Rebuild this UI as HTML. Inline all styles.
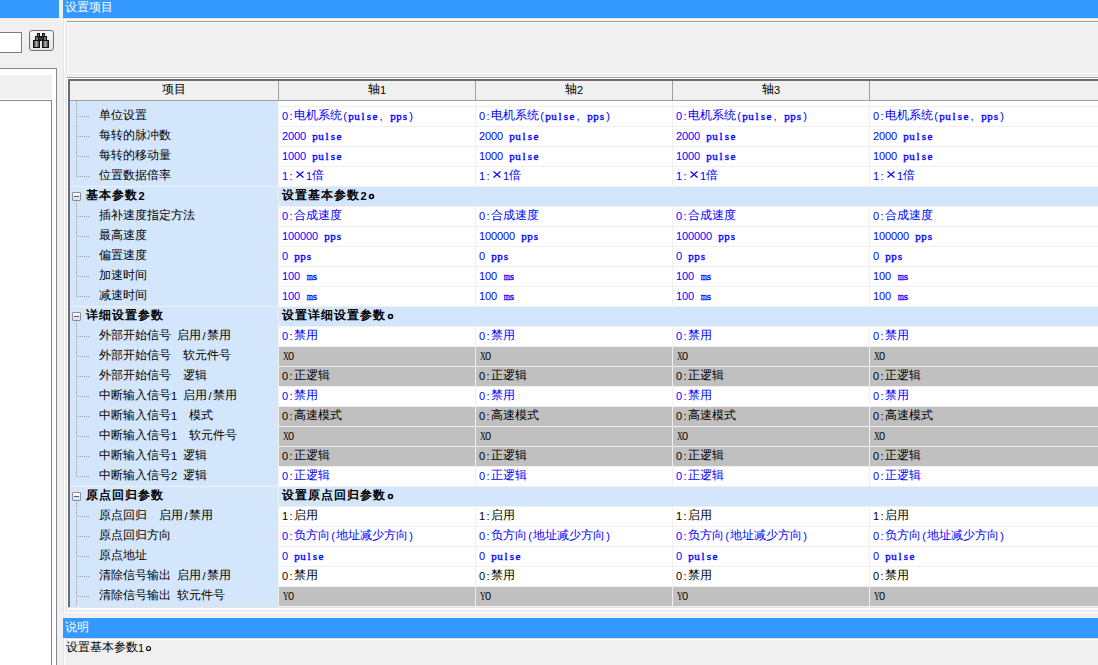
<!DOCTYPE html>
<html><head><meta charset="utf-8"><style>
html,body{margin:0;padding:0}
body{width:1098px;height:665px;overflow:hidden;position:relative;background:#f0f0f0;font-family:"Liberation Sans",sans-serif;font-size:12px;color:#000}
body>div,body>svg{position:absolute}
.t,.w{position:absolute;white-space:nowrap;height:19px;line-height:19px}
.w{color:#fff;height:18px;line-height:18px}
.hd{text-align:center}
i{font-style:normal;display:inline-block;text-align:center;vertical-align:top}
i.c{width:12px;font-size:12px;position:relative;top:-1px}
i.m{transform:scaleX(0.72)}
i.s{width:6px}
i.d{width:6px;font-size:11px}
i.l{width:6px;font-family:"Liberation Serif",serif;font-size:11px;-webkit-text-stroke:0.35px currentColor}
i.u{width:6px;font-family:"Liberation Serif",serif;font-size:12px}
i.u.m{transform:scaleX(0.66)}
.bold i.c{font-weight:bold;width:13px;text-align:left}
.bold i.d{font-weight:bold;width:7px}
.dv{position:absolute;width:1px;background:repeating-linear-gradient(to bottom,#a0a0a0 0 1px,transparent 1px 2px)}
.dh{position:absolute;height:1px;background:repeating-linear-gradient(to right,#a0a0a0 0 1px,transparent 1px 2px)}
</style></head><body>
<div style="left:0px;top:0px;width:59px;height:18px;background:#3399ff"></div>
<div style="left:-5px;top:32px;width:27px;height:21px;background:#fff;border:1px solid #7a7a7a;box-sizing:border-box"></div>
<div style="left:29px;top:30px;width:25px;height:21px;box-sizing:border-box;border:1px solid #707070;border-radius:3px;background:linear-gradient(#f6f6f6,#e4e4e4)"></div>
<svg style="position:absolute;left:0;top:0" width="60" height="60" shape-rendering="crispEdges">
<defs><linearGradient id="bg" x1="0" x2="1"><stop offset="0" stop-color="#3a3a3a"/><stop offset="0.5" stop-color="#b0b0b0"/><stop offset="1" stop-color="#3a3a3a"/></linearGradient></defs>
<rect x="37" y="33" width="3" height="4" fill="#111"/><rect x="42" y="33" width="3" height="4" fill="#111"/>
<rect x="38" y="34" width="1" height="2" fill="#777"/><rect x="43" y="34" width="1" height="2" fill="#777"/>
<rect x="35" y="36" width="12" height="5" fill="#111"/>
<rect x="36" y="37" width="2" height="3" fill="url(#bg)"/><rect x="44" y="37" width="2" height="3" fill="url(#bg)"/>
<rect x="39" y="37" width="4" height="3" fill="#333"/>
<rect x="33" y="40" width="7" height="8" fill="#111"/><rect x="42" y="40" width="7" height="8" fill="#111"/>
<rect x="34" y="41" width="5" height="6" fill="url(#bg)"/><rect x="43" y="41" width="5" height="6" fill="url(#bg)"/>
</svg>
<div style="left:-5px;top:68px;width:62px;height:700px;background:#fff;border:1px solid #828790;box-sizing:border-box"></div>
<div style="left:0px;top:75px;width:52px;height:24px;background:#f0f0f0"></div>
<div style="left:-5px;top:100px;width:57px;height:700px;background:#fff;border:1px solid #828790;box-sizing:border-box"></div>
<div style="left:63px;top:0px;width:1100px;height:18px;background:#3399ff"></div>
<div class="w" style="left:65px;top:-1px"><i class="c">设</i><i class="c">置</i><i class="c">项</i><i class="c">目</i></div>
<div style="left:59px;top:0px;width:1px;height:18px;background:#f4efe9"></div>
<div style="left:62px;top:0px;width:1px;height:18px;background:#f4efe9"></div>
<div style="left:63px;top:18px;width:1100px;height:1px;background:#e6dcd2"></div>
<div style="left:0px;top:18px;width:59px;height:1px;background:#efe6dd"></div>
<div style="left:63px;top:19px;width:1px;height:600px;background:#e3e6ec"></div>
<div style="left:64px;top:19px;width:1100px;height:1px;background:#fff"></div>
<div style="left:64px;top:19px;width:1px;height:600px;background:#fff"></div>
<div style="left:66px;top:21px;width:1100px;height:1px;background:#a0a0a0"></div>
<div style="left:66px;top:21px;width:1px;height:53px;background:#e3e6ec"></div>
<div style="left:67px;top:22px;width:1100px;height:1px;background:#fff"></div>
<div style="left:67px;top:22px;width:1px;height:51px;background:#fff"></div>
<div style="left:66px;top:73px;width:1100px;height:1px;background:#fff"></div>
<div style="left:66px;top:74px;width:1100px;height:1px;background:#e3e6ec"></div>
<div style="left:66px;top:77px;width:1100px;height:1px;background:#a0a0a0"></div>
<div style="left:66px;top:77px;width:1px;height:536px;background:#e3e6ec"></div>
<div style="left:67px;top:78px;width:1100px;height:1px;background:#fff"></div>
<div style="left:67px;top:78px;width:1px;height:534px;background:#fff"></div>
<div style="left:68px;top:79px;width:1100px;height:2px;background:#6d6d6d"></div>
<div style="left:68px;top:79px;width:2px;height:528px;background:#6d6d6d"></div>
<div style="left:67px;top:607px;width:1100px;height:1px;background:#e3e3e3"></div>
<div style="left:67px;top:608px;width:1100px;height:2px;background:#fff"></div>
<div style="left:66px;top:610px;width:1100px;height:1px;background:#e3e6ec"></div>
<div style="left:66px;top:612px;width:1100px;height:1px;background:#fff"></div>
<div style="left:70px;top:81px;width:1100px;height:19px;background:#f0f0f0"></div>
<div style="left:70px;top:100px;width:1100px;height:1px;background:#a0a0a0"></div>
<div style="left:278px;top:81px;width:1px;height:19px;background:#a0a0a0"></div>
<div style="left:475px;top:81px;width:1px;height:19px;background:#a0a0a0"></div>
<div style="left:672px;top:81px;width:1px;height:19px;background:#a0a0a0"></div>
<div style="left:869px;top:81px;width:1px;height:19px;background:#a0a0a0"></div>
<div class="t hd" style="left:70px;top:81px;width:208px"><i class="c">项</i><i class="c">目</i></div>
<div class="t hd" style="left:279px;top:81px;width:196px"><i class="c">轴</i><i class="d">1</i></div>
<div class="t hd" style="left:476px;top:81px;width:196px"><i class="c">轴</i><i class="d">2</i></div>
<div class="t hd" style="left:673px;top:81px;width:196px"><i class="c">轴</i><i class="d">3</i></div>
<div style="left:70px;top:101px;width:208px;height:506px;background:#d4e6fc"></div>
<div style="left:278px;top:101px;width:1px;height:506px;background:#f0f0f0"></div>
<div style="left:279px;top:101px;width:1100px;height:5px;background:#fff"></div>
<div style="left:475px;top:101px;width:1px;height:5px;background:#f0f0f0"></div>
<div style="left:672px;top:101px;width:1px;height:5px;background:#f0f0f0"></div>
<div style="left:869px;top:101px;width:1px;height:5px;background:#f0f0f0"></div>
<div style="left:279px;top:106px;width:1100px;height:1px;background:#f0f0f0"></div>
<div style="left:279px;top:107px;width:1100px;height:19px;background:#fff"></div>
<div style="left:475px;top:106px;width:1px;height:20px;background:#f0f0f0"></div>
<div style="left:672px;top:106px;width:1px;height:20px;background:#f0f0f0"></div>
<div style="left:869px;top:106px;width:1px;height:20px;background:#f0f0f0"></div>
<div class="t" style="left:99px;top:107px;"><i class="c">单</i><i class="c">位</i><i class="c">设</i><i class="c">置</i></div>
<div class="t" style="left:282px;top:107px;color:#0000ff"><i class="d">0</i><i class="d">:</i><i class="c">电</i><i class="c">机</i><i class="c">系</i><i class="c">统</i><i class="d">(</i><i class="l">p</i><i class="l">u</i><i class="l">l</i><i class="l">s</i><i class="l">e</i><i class="d">,</i><i class="s"></i><i class="l">p</i><i class="l">p</i><i class="l">s</i><i class="d">)</i></div>
<div class="t" style="left:479px;top:107px;color:#0000ff"><i class="d">0</i><i class="d">:</i><i class="c">电</i><i class="c">机</i><i class="c">系</i><i class="c">统</i><i class="d">(</i><i class="l">p</i><i class="l">u</i><i class="l">l</i><i class="l">s</i><i class="l">e</i><i class="d">,</i><i class="s"></i><i class="l">p</i><i class="l">p</i><i class="l">s</i><i class="d">)</i></div>
<div class="t" style="left:676px;top:107px;color:#0000ff"><i class="d">0</i><i class="d">:</i><i class="c">电</i><i class="c">机</i><i class="c">系</i><i class="c">统</i><i class="d">(</i><i class="l">p</i><i class="l">u</i><i class="l">l</i><i class="l">s</i><i class="l">e</i><i class="d">,</i><i class="s"></i><i class="l">p</i><i class="l">p</i><i class="l">s</i><i class="d">)</i></div>
<div class="t" style="left:873px;top:107px;color:#0000ff"><i class="d">0</i><i class="d">:</i><i class="c">电</i><i class="c">机</i><i class="c">系</i><i class="c">统</i><i class="d">(</i><i class="l">p</i><i class="l">u</i><i class="l">l</i><i class="l">s</i><i class="l">e</i><i class="d">,</i><i class="s"></i><i class="l">p</i><i class="l">p</i><i class="l">s</i><i class="d">)</i></div>
<div class="dv" style="left:76px;top:101px;height:25px"></div>
<div class="dh" style="left:78px;top:116px;width:11px"></div>
<div style="left:279px;top:126px;width:1100px;height:1px;background:#f0f0f0"></div>
<div style="left:279px;top:127px;width:1100px;height:19px;background:#fff"></div>
<div style="left:475px;top:126px;width:1px;height:20px;background:#f0f0f0"></div>
<div style="left:672px;top:126px;width:1px;height:20px;background:#f0f0f0"></div>
<div style="left:869px;top:126px;width:1px;height:20px;background:#f0f0f0"></div>
<div class="t" style="left:99px;top:127px;"><i class="c">每</i><i class="c">转</i><i class="c">的</i><i class="c">脉</i><i class="c">冲</i><i class="c">数</i></div>
<div class="t" style="left:282px;top:127px;color:#0000ff"><i class="d">2</i><i class="d">0</i><i class="d">0</i><i class="d">0</i><i class="s"></i><i class="l">p</i><i class="l">u</i><i class="l">l</i><i class="l">s</i><i class="l">e</i></div>
<div class="t" style="left:479px;top:127px;color:#0000ff"><i class="d">2</i><i class="d">0</i><i class="d">0</i><i class="d">0</i><i class="s"></i><i class="l">p</i><i class="l">u</i><i class="l">l</i><i class="l">s</i><i class="l">e</i></div>
<div class="t" style="left:676px;top:127px;color:#0000ff"><i class="d">2</i><i class="d">0</i><i class="d">0</i><i class="d">0</i><i class="s"></i><i class="l">p</i><i class="l">u</i><i class="l">l</i><i class="l">s</i><i class="l">e</i></div>
<div class="t" style="left:873px;top:127px;color:#0000ff"><i class="d">2</i><i class="d">0</i><i class="d">0</i><i class="d">0</i><i class="s"></i><i class="l">p</i><i class="l">u</i><i class="l">l</i><i class="l">s</i><i class="l">e</i></div>
<div class="dv" style="left:76px;top:126px;height:20px"></div>
<div class="dh" style="left:78px;top:136px;width:11px"></div>
<div style="left:279px;top:146px;width:1100px;height:1px;background:#f0f0f0"></div>
<div style="left:279px;top:147px;width:1100px;height:19px;background:#fff"></div>
<div style="left:475px;top:146px;width:1px;height:20px;background:#f0f0f0"></div>
<div style="left:672px;top:146px;width:1px;height:20px;background:#f0f0f0"></div>
<div style="left:869px;top:146px;width:1px;height:20px;background:#f0f0f0"></div>
<div class="t" style="left:99px;top:147px;"><i class="c">每</i><i class="c">转</i><i class="c">的</i><i class="c">移</i><i class="c">动</i><i class="c">量</i></div>
<div class="t" style="left:282px;top:147px;color:#0000ff"><i class="d">1</i><i class="d">0</i><i class="d">0</i><i class="d">0</i><i class="s"></i><i class="l">p</i><i class="l">u</i><i class="l">l</i><i class="l">s</i><i class="l">e</i></div>
<div class="t" style="left:479px;top:147px;color:#0000ff"><i class="d">1</i><i class="d">0</i><i class="d">0</i><i class="d">0</i><i class="s"></i><i class="l">p</i><i class="l">u</i><i class="l">l</i><i class="l">s</i><i class="l">e</i></div>
<div class="t" style="left:676px;top:147px;color:#0000ff"><i class="d">1</i><i class="d">0</i><i class="d">0</i><i class="d">0</i><i class="s"></i><i class="l">p</i><i class="l">u</i><i class="l">l</i><i class="l">s</i><i class="l">e</i></div>
<div class="t" style="left:873px;top:147px;color:#0000ff"><i class="d">1</i><i class="d">0</i><i class="d">0</i><i class="d">0</i><i class="s"></i><i class="l">p</i><i class="l">u</i><i class="l">l</i><i class="l">s</i><i class="l">e</i></div>
<div class="dv" style="left:76px;top:146px;height:20px"></div>
<div class="dh" style="left:78px;top:156px;width:11px"></div>
<div style="left:279px;top:166px;width:1100px;height:1px;background:#f0f0f0"></div>
<div style="left:279px;top:167px;width:1100px;height:19px;background:#fff"></div>
<div style="left:475px;top:166px;width:1px;height:20px;background:#f0f0f0"></div>
<div style="left:672px;top:166px;width:1px;height:20px;background:#f0f0f0"></div>
<div style="left:869px;top:166px;width:1px;height:20px;background:#f0f0f0"></div>
<div class="t" style="left:99px;top:167px;"><i class="c">位</i><i class="c">置</i><i class="c">数</i><i class="c">据</i><i class="c">倍</i><i class="c">率</i></div>
<div class="t" style="left:282px;top:167px;color:#0000ff"><i class="d">1</i><i class="d">:</i><i class="c"><svg width="12" height="12" style="position:absolute;left:0;top:0"><path d="M2.5 5.5L9.5 11.5M9.5 5.5L2.5 11.5" stroke="currentColor" stroke-width="1.1" fill="none"/></svg></i><i class="d">1</i><i class="c">倍</i></div>
<div class="t" style="left:479px;top:167px;color:#0000ff"><i class="d">1</i><i class="d">:</i><i class="c"><svg width="12" height="12" style="position:absolute;left:0;top:0"><path d="M2.5 5.5L9.5 11.5M9.5 5.5L2.5 11.5" stroke="currentColor" stroke-width="1.1" fill="none"/></svg></i><i class="d">1</i><i class="c">倍</i></div>
<div class="t" style="left:676px;top:167px;color:#0000ff"><i class="d">1</i><i class="d">:</i><i class="c"><svg width="12" height="12" style="position:absolute;left:0;top:0"><path d="M2.5 5.5L9.5 11.5M9.5 5.5L2.5 11.5" stroke="currentColor" stroke-width="1.1" fill="none"/></svg></i><i class="d">1</i><i class="c">倍</i></div>
<div class="t" style="left:873px;top:167px;color:#0000ff"><i class="d">1</i><i class="d">:</i><i class="c"><svg width="12" height="12" style="position:absolute;left:0;top:0"><path d="M2.5 5.5L9.5 11.5M9.5 5.5L2.5 11.5" stroke="currentColor" stroke-width="1.1" fill="none"/></svg></i><i class="d">1</i><i class="c">倍</i></div>
<div class="dv" style="left:76px;top:166px;height:11px"></div>
<div class="dh" style="left:78px;top:176px;width:11px"></div>
<div style="left:70px;top:186px;width:208px;height:1px;background:#f0f0f0"></div>
<div style="left:279px;top:186px;width:1100px;height:1px;background:#f0f0f0"></div>
<div style="left:279px;top:187px;width:1100px;height:19px;background:#d4e6fc"></div>
<div class="t bold" style="left:86px;top:187px;"><i class="c">基</i><i class="c">本</i><i class="c">参</i><i class="c">数</i><i class="d">2</i></div>
<div class="t bold" style="left:282px;top:187px;"><i class="c">设</i><i class="c">置</i><i class="c">基</i><i class="c">本</i><i class="c">参</i><i class="c">数</i><i class="d">2</i><i class="c"><svg width="13" height="20" style="position:absolute;left:0;top:0"><circle cx="4.5" cy="10.5" r="2" stroke="currentColor" stroke-width="1.6" fill="none"/></svg></i></div>
<div style="left:72px;top:192px;width:9px;height:9px;box-sizing:border-box;border:1px solid #8f8f8f;border-radius:1px;background:linear-gradient(#ffffff,#dcdcdc)"></div>
<div style="left:74px;top:196px;width:5px;height:1px;background:#3a5bb5"></div>
<div class="dv" style="left:76px;top:201px;height:5px"></div>
<div style="left:279px;top:206px;width:1100px;height:1px;background:#f0f0f0"></div>
<div style="left:279px;top:207px;width:1100px;height:19px;background:#fff"></div>
<div style="left:475px;top:206px;width:1px;height:20px;background:#f0f0f0"></div>
<div style="left:672px;top:206px;width:1px;height:20px;background:#f0f0f0"></div>
<div style="left:869px;top:206px;width:1px;height:20px;background:#f0f0f0"></div>
<div class="t" style="left:99px;top:207px;"><i class="c">插</i><i class="c">补</i><i class="c">速</i><i class="c">度</i><i class="c">指</i><i class="c">定</i><i class="c">方</i><i class="c">法</i></div>
<div class="t" style="left:282px;top:207px;color:#0000ff"><i class="d">0</i><i class="d">:</i><i class="c">合</i><i class="c">成</i><i class="c">速</i><i class="c">度</i></div>
<div class="t" style="left:479px;top:207px;color:#0000ff"><i class="d">0</i><i class="d">:</i><i class="c">合</i><i class="c">成</i><i class="c">速</i><i class="c">度</i></div>
<div class="t" style="left:676px;top:207px;color:#0000ff"><i class="d">0</i><i class="d">:</i><i class="c">合</i><i class="c">成</i><i class="c">速</i><i class="c">度</i></div>
<div class="t" style="left:873px;top:207px;color:#0000ff"><i class="d">0</i><i class="d">:</i><i class="c">合</i><i class="c">成</i><i class="c">速</i><i class="c">度</i></div>
<div class="dv" style="left:76px;top:206px;height:20px"></div>
<div class="dh" style="left:78px;top:216px;width:11px"></div>
<div style="left:279px;top:226px;width:1100px;height:1px;background:#f0f0f0"></div>
<div style="left:279px;top:227px;width:1100px;height:19px;background:#fff"></div>
<div style="left:475px;top:226px;width:1px;height:20px;background:#f0f0f0"></div>
<div style="left:672px;top:226px;width:1px;height:20px;background:#f0f0f0"></div>
<div style="left:869px;top:226px;width:1px;height:20px;background:#f0f0f0"></div>
<div class="t" style="left:99px;top:227px;"><i class="c">最</i><i class="c">高</i><i class="c">速</i><i class="c">度</i></div>
<div class="t" style="left:282px;top:227px;color:#0000ff"><i class="d">1</i><i class="d">0</i><i class="d">0</i><i class="d">0</i><i class="d">0</i><i class="d">0</i><i class="s"></i><i class="l">p</i><i class="l">p</i><i class="l">s</i></div>
<div class="t" style="left:479px;top:227px;color:#0000ff"><i class="d">1</i><i class="d">0</i><i class="d">0</i><i class="d">0</i><i class="d">0</i><i class="d">0</i><i class="s"></i><i class="l">p</i><i class="l">p</i><i class="l">s</i></div>
<div class="t" style="left:676px;top:227px;color:#0000ff"><i class="d">1</i><i class="d">0</i><i class="d">0</i><i class="d">0</i><i class="d">0</i><i class="d">0</i><i class="s"></i><i class="l">p</i><i class="l">p</i><i class="l">s</i></div>
<div class="t" style="left:873px;top:227px;color:#0000ff"><i class="d">1</i><i class="d">0</i><i class="d">0</i><i class="d">0</i><i class="d">0</i><i class="d">0</i><i class="s"></i><i class="l">p</i><i class="l">p</i><i class="l">s</i></div>
<div class="dv" style="left:76px;top:226px;height:20px"></div>
<div class="dh" style="left:78px;top:236px;width:11px"></div>
<div style="left:279px;top:246px;width:1100px;height:1px;background:#f0f0f0"></div>
<div style="left:279px;top:247px;width:1100px;height:19px;background:#fff"></div>
<div style="left:475px;top:246px;width:1px;height:20px;background:#f0f0f0"></div>
<div style="left:672px;top:246px;width:1px;height:20px;background:#f0f0f0"></div>
<div style="left:869px;top:246px;width:1px;height:20px;background:#f0f0f0"></div>
<div class="t" style="left:99px;top:247px;"><i class="c">偏</i><i class="c">置</i><i class="c">速</i><i class="c">度</i></div>
<div class="t" style="left:282px;top:247px;color:#0000ff"><i class="d">0</i><i class="s"></i><i class="l">p</i><i class="l">p</i><i class="l">s</i></div>
<div class="t" style="left:479px;top:247px;color:#0000ff"><i class="d">0</i><i class="s"></i><i class="l">p</i><i class="l">p</i><i class="l">s</i></div>
<div class="t" style="left:676px;top:247px;color:#0000ff"><i class="d">0</i><i class="s"></i><i class="l">p</i><i class="l">p</i><i class="l">s</i></div>
<div class="t" style="left:873px;top:247px;color:#0000ff"><i class="d">0</i><i class="s"></i><i class="l">p</i><i class="l">p</i><i class="l">s</i></div>
<div class="dv" style="left:76px;top:246px;height:20px"></div>
<div class="dh" style="left:78px;top:256px;width:11px"></div>
<div style="left:279px;top:266px;width:1100px;height:1px;background:#f0f0f0"></div>
<div style="left:279px;top:267px;width:1100px;height:19px;background:#fff"></div>
<div style="left:475px;top:266px;width:1px;height:20px;background:#f0f0f0"></div>
<div style="left:672px;top:266px;width:1px;height:20px;background:#f0f0f0"></div>
<div style="left:869px;top:266px;width:1px;height:20px;background:#f0f0f0"></div>
<div class="t" style="left:99px;top:267px;"><i class="c">加</i><i class="c">速</i><i class="c">时</i><i class="c">间</i></div>
<div class="t" style="left:282px;top:267px;color:#0000ff"><i class="d">1</i><i class="d">0</i><i class="d">0</i><i class="s"></i><i class="l m">m</i><i class="l">s</i></div>
<div class="t" style="left:479px;top:267px;color:#0000ff"><i class="d">1</i><i class="d">0</i><i class="d">0</i><i class="s"></i><i class="l m">m</i><i class="l">s</i></div>
<div class="t" style="left:676px;top:267px;color:#0000ff"><i class="d">1</i><i class="d">0</i><i class="d">0</i><i class="s"></i><i class="l m">m</i><i class="l">s</i></div>
<div class="t" style="left:873px;top:267px;color:#0000ff"><i class="d">1</i><i class="d">0</i><i class="d">0</i><i class="s"></i><i class="l m">m</i><i class="l">s</i></div>
<div class="dv" style="left:76px;top:266px;height:20px"></div>
<div class="dh" style="left:78px;top:276px;width:11px"></div>
<div style="left:279px;top:286px;width:1100px;height:1px;background:#f0f0f0"></div>
<div style="left:279px;top:287px;width:1100px;height:19px;background:#fff"></div>
<div style="left:475px;top:286px;width:1px;height:20px;background:#f0f0f0"></div>
<div style="left:672px;top:286px;width:1px;height:20px;background:#f0f0f0"></div>
<div style="left:869px;top:286px;width:1px;height:20px;background:#f0f0f0"></div>
<div class="t" style="left:99px;top:287px;"><i class="c">减</i><i class="c">速</i><i class="c">时</i><i class="c">间</i></div>
<div class="t" style="left:282px;top:287px;color:#0000ff"><i class="d">1</i><i class="d">0</i><i class="d">0</i><i class="s"></i><i class="l m">m</i><i class="l">s</i></div>
<div class="t" style="left:479px;top:287px;color:#0000ff"><i class="d">1</i><i class="d">0</i><i class="d">0</i><i class="s"></i><i class="l m">m</i><i class="l">s</i></div>
<div class="t" style="left:676px;top:287px;color:#0000ff"><i class="d">1</i><i class="d">0</i><i class="d">0</i><i class="s"></i><i class="l m">m</i><i class="l">s</i></div>
<div class="t" style="left:873px;top:287px;color:#0000ff"><i class="d">1</i><i class="d">0</i><i class="d">0</i><i class="s"></i><i class="l m">m</i><i class="l">s</i></div>
<div class="dv" style="left:76px;top:286px;height:11px"></div>
<div class="dh" style="left:78px;top:296px;width:11px"></div>
<div style="left:70px;top:306px;width:208px;height:1px;background:#f0f0f0"></div>
<div style="left:279px;top:306px;width:1100px;height:1px;background:#f0f0f0"></div>
<div style="left:279px;top:307px;width:1100px;height:19px;background:#d4e6fc"></div>
<div class="t bold" style="left:86px;top:307px;"><i class="c">详</i><i class="c">细</i><i class="c">设</i><i class="c">置</i><i class="c">参</i><i class="c">数</i></div>
<div class="t bold" style="left:282px;top:307px;"><i class="c">设</i><i class="c">置</i><i class="c">详</i><i class="c">细</i><i class="c">设</i><i class="c">置</i><i class="c">参</i><i class="c">数</i><i class="c"><svg width="13" height="20" style="position:absolute;left:0;top:0"><circle cx="4.5" cy="10.5" r="2" stroke="currentColor" stroke-width="1.6" fill="none"/></svg></i></div>
<div style="left:72px;top:312px;width:9px;height:9px;box-sizing:border-box;border:1px solid #8f8f8f;border-radius:1px;background:linear-gradient(#ffffff,#dcdcdc)"></div>
<div style="left:74px;top:316px;width:5px;height:1px;background:#3a5bb5"></div>
<div class="dv" style="left:76px;top:321px;height:5px"></div>
<div style="left:279px;top:326px;width:1100px;height:1px;background:#f0f0f0"></div>
<div style="left:279px;top:327px;width:1100px;height:19px;background:#fff"></div>
<div style="left:475px;top:326px;width:1px;height:20px;background:#f0f0f0"></div>
<div style="left:672px;top:326px;width:1px;height:20px;background:#f0f0f0"></div>
<div style="left:869px;top:326px;width:1px;height:20px;background:#f0f0f0"></div>
<div class="t" style="left:99px;top:327px;"><i class="c">外</i><i class="c">部</i><i class="c">开</i><i class="c">始</i><i class="c">信</i><i class="c">号</i><i class="s"></i><i class="c">启</i><i class="c">用</i><i class="d">/</i><i class="c">禁</i><i class="c">用</i></div>
<div class="t" style="left:282px;top:327px;color:#0000ff"><i class="d">0</i><i class="d">:</i><i class="c">禁</i><i class="c">用</i></div>
<div class="t" style="left:479px;top:327px;color:#0000ff"><i class="d">0</i><i class="d">:</i><i class="c">禁</i><i class="c">用</i></div>
<div class="t" style="left:676px;top:327px;color:#0000ff"><i class="d">0</i><i class="d">:</i><i class="c">禁</i><i class="c">用</i></div>
<div class="t" style="left:873px;top:327px;color:#0000ff"><i class="d">0</i><i class="d">:</i><i class="c">禁</i><i class="c">用</i></div>
<div class="dv" style="left:76px;top:326px;height:20px"></div>
<div class="dh" style="left:78px;top:336px;width:11px"></div>
<div style="left:279px;top:346px;width:1100px;height:1px;background:#f0f0f0"></div>
<div style="left:279px;top:347px;width:1100px;height:19px;background:#c0c0c0"></div>
<div style="left:475px;top:346px;width:1px;height:20px;background:#f0f0f0"></div>
<div style="left:672px;top:346px;width:1px;height:20px;background:#f0f0f0"></div>
<div style="left:869px;top:346px;width:1px;height:20px;background:#f0f0f0"></div>
<div class="t" style="left:99px;top:347px;"><i class="c">外</i><i class="c">部</i><i class="c">开</i><i class="c">始</i><i class="c">信</i><i class="c">号</i><i class="s"></i><i class="s"></i><i class="c">软</i><i class="c">元</i><i class="c">件</i><i class="c">号</i></div>
<div class="t" style="left:282px;top:347px;color:#000"><i class="u m">X</i><i class="d">0</i></div>
<div class="t" style="left:479px;top:347px;color:#000"><i class="u m">X</i><i class="d">0</i></div>
<div class="t" style="left:676px;top:347px;color:#000"><i class="u m">X</i><i class="d">0</i></div>
<div class="t" style="left:873px;top:347px;color:#000"><i class="u m">X</i><i class="d">0</i></div>
<div class="dv" style="left:76px;top:346px;height:20px"></div>
<div class="dh" style="left:78px;top:356px;width:11px"></div>
<div style="left:279px;top:366px;width:1100px;height:1px;background:#f0f0f0"></div>
<div style="left:279px;top:367px;width:1100px;height:19px;background:#c0c0c0"></div>
<div style="left:475px;top:366px;width:1px;height:20px;background:#f0f0f0"></div>
<div style="left:672px;top:366px;width:1px;height:20px;background:#f0f0f0"></div>
<div style="left:869px;top:366px;width:1px;height:20px;background:#f0f0f0"></div>
<div class="t" style="left:99px;top:367px;"><i class="c">外</i><i class="c">部</i><i class="c">开</i><i class="c">始</i><i class="c">信</i><i class="c">号</i><i class="s"></i><i class="s"></i><i class="c">逻</i><i class="c">辑</i></div>
<div class="t" style="left:282px;top:367px;color:#000"><i class="d">0</i><i class="d">:</i><i class="c">正</i><i class="c">逻</i><i class="c">辑</i></div>
<div class="t" style="left:479px;top:367px;color:#000"><i class="d">0</i><i class="d">:</i><i class="c">正</i><i class="c">逻</i><i class="c">辑</i></div>
<div class="t" style="left:676px;top:367px;color:#000"><i class="d">0</i><i class="d">:</i><i class="c">正</i><i class="c">逻</i><i class="c">辑</i></div>
<div class="t" style="left:873px;top:367px;color:#000"><i class="d">0</i><i class="d">:</i><i class="c">正</i><i class="c">逻</i><i class="c">辑</i></div>
<div class="dv" style="left:76px;top:366px;height:20px"></div>
<div class="dh" style="left:78px;top:376px;width:11px"></div>
<div style="left:279px;top:386px;width:1100px;height:1px;background:#f0f0f0"></div>
<div style="left:279px;top:387px;width:1100px;height:19px;background:#fff"></div>
<div style="left:475px;top:386px;width:1px;height:20px;background:#f0f0f0"></div>
<div style="left:672px;top:386px;width:1px;height:20px;background:#f0f0f0"></div>
<div style="left:869px;top:386px;width:1px;height:20px;background:#f0f0f0"></div>
<div class="t" style="left:99px;top:387px;"><i class="c">中</i><i class="c">断</i><i class="c">输</i><i class="c">入</i><i class="c">信</i><i class="c">号</i><i class="d">1</i><i class="s"></i><i class="c">启</i><i class="c">用</i><i class="d">/</i><i class="c">禁</i><i class="c">用</i></div>
<div class="t" style="left:282px;top:387px;color:#0000ff"><i class="d">0</i><i class="d">:</i><i class="c">禁</i><i class="c">用</i></div>
<div class="t" style="left:479px;top:387px;color:#0000ff"><i class="d">0</i><i class="d">:</i><i class="c">禁</i><i class="c">用</i></div>
<div class="t" style="left:676px;top:387px;color:#0000ff"><i class="d">0</i><i class="d">:</i><i class="c">禁</i><i class="c">用</i></div>
<div class="t" style="left:873px;top:387px;color:#0000ff"><i class="d">0</i><i class="d">:</i><i class="c">禁</i><i class="c">用</i></div>
<div class="dv" style="left:76px;top:386px;height:20px"></div>
<div class="dh" style="left:78px;top:396px;width:11px"></div>
<div style="left:279px;top:406px;width:1100px;height:1px;background:#f0f0f0"></div>
<div style="left:279px;top:407px;width:1100px;height:19px;background:#c0c0c0"></div>
<div style="left:475px;top:406px;width:1px;height:20px;background:#f0f0f0"></div>
<div style="left:672px;top:406px;width:1px;height:20px;background:#f0f0f0"></div>
<div style="left:869px;top:406px;width:1px;height:20px;background:#f0f0f0"></div>
<div class="t" style="left:99px;top:407px;"><i class="c">中</i><i class="c">断</i><i class="c">输</i><i class="c">入</i><i class="c">信</i><i class="c">号</i><i class="d">1</i><i class="s"></i><i class="s"></i><i class="c">模</i><i class="c">式</i></div>
<div class="t" style="left:282px;top:407px;color:#000"><i class="d">0</i><i class="d">:</i><i class="c">高</i><i class="c">速</i><i class="c">模</i><i class="c">式</i></div>
<div class="t" style="left:479px;top:407px;color:#000"><i class="d">0</i><i class="d">:</i><i class="c">高</i><i class="c">速</i><i class="c">模</i><i class="c">式</i></div>
<div class="t" style="left:676px;top:407px;color:#000"><i class="d">0</i><i class="d">:</i><i class="c">高</i><i class="c">速</i><i class="c">模</i><i class="c">式</i></div>
<div class="t" style="left:873px;top:407px;color:#000"><i class="d">0</i><i class="d">:</i><i class="c">高</i><i class="c">速</i><i class="c">模</i><i class="c">式</i></div>
<div class="dv" style="left:76px;top:406px;height:20px"></div>
<div class="dh" style="left:78px;top:416px;width:11px"></div>
<div style="left:279px;top:426px;width:1100px;height:1px;background:#f0f0f0"></div>
<div style="left:279px;top:427px;width:1100px;height:19px;background:#c0c0c0"></div>
<div style="left:475px;top:426px;width:1px;height:20px;background:#f0f0f0"></div>
<div style="left:672px;top:426px;width:1px;height:20px;background:#f0f0f0"></div>
<div style="left:869px;top:426px;width:1px;height:20px;background:#f0f0f0"></div>
<div class="t" style="left:99px;top:427px;"><i class="c">中</i><i class="c">断</i><i class="c">输</i><i class="c">入</i><i class="c">信</i><i class="c">号</i><i class="d">1</i><i class="s"></i><i class="s"></i><i class="c">软</i><i class="c">元</i><i class="c">件</i><i class="c">号</i></div>
<div class="t" style="left:282px;top:427px;color:#000"><i class="u m">X</i><i class="d">0</i></div>
<div class="t" style="left:479px;top:427px;color:#000"><i class="u m">X</i><i class="d">0</i></div>
<div class="t" style="left:676px;top:427px;color:#000"><i class="u m">X</i><i class="d">0</i></div>
<div class="t" style="left:873px;top:427px;color:#000"><i class="u m">X</i><i class="d">0</i></div>
<div class="dv" style="left:76px;top:426px;height:20px"></div>
<div class="dh" style="left:78px;top:436px;width:11px"></div>
<div style="left:279px;top:446px;width:1100px;height:1px;background:#f0f0f0"></div>
<div style="left:279px;top:447px;width:1100px;height:19px;background:#c0c0c0"></div>
<div style="left:475px;top:446px;width:1px;height:20px;background:#f0f0f0"></div>
<div style="left:672px;top:446px;width:1px;height:20px;background:#f0f0f0"></div>
<div style="left:869px;top:446px;width:1px;height:20px;background:#f0f0f0"></div>
<div class="t" style="left:99px;top:447px;"><i class="c">中</i><i class="c">断</i><i class="c">输</i><i class="c">入</i><i class="c">信</i><i class="c">号</i><i class="d">1</i><i class="s"></i><i class="c">逻</i><i class="c">辑</i></div>
<div class="t" style="left:282px;top:447px;color:#000"><i class="d">0</i><i class="d">:</i><i class="c">正</i><i class="c">逻</i><i class="c">辑</i></div>
<div class="t" style="left:479px;top:447px;color:#000"><i class="d">0</i><i class="d">:</i><i class="c">正</i><i class="c">逻</i><i class="c">辑</i></div>
<div class="t" style="left:676px;top:447px;color:#000"><i class="d">0</i><i class="d">:</i><i class="c">正</i><i class="c">逻</i><i class="c">辑</i></div>
<div class="t" style="left:873px;top:447px;color:#000"><i class="d">0</i><i class="d">:</i><i class="c">正</i><i class="c">逻</i><i class="c">辑</i></div>
<div class="dv" style="left:76px;top:446px;height:20px"></div>
<div class="dh" style="left:78px;top:456px;width:11px"></div>
<div style="left:279px;top:466px;width:1100px;height:1px;background:#f0f0f0"></div>
<div style="left:279px;top:467px;width:1100px;height:19px;background:#fff"></div>
<div style="left:475px;top:466px;width:1px;height:20px;background:#f0f0f0"></div>
<div style="left:672px;top:466px;width:1px;height:20px;background:#f0f0f0"></div>
<div style="left:869px;top:466px;width:1px;height:20px;background:#f0f0f0"></div>
<div class="t" style="left:99px;top:467px;"><i class="c">中</i><i class="c">断</i><i class="c">输</i><i class="c">入</i><i class="c">信</i><i class="c">号</i><i class="d">2</i><i class="s"></i><i class="c">逻</i><i class="c">辑</i></div>
<div class="t" style="left:282px;top:467px;color:#0000ff"><i class="d">0</i><i class="d">:</i><i class="c">正</i><i class="c">逻</i><i class="c">辑</i></div>
<div class="t" style="left:479px;top:467px;color:#0000ff"><i class="d">0</i><i class="d">:</i><i class="c">正</i><i class="c">逻</i><i class="c">辑</i></div>
<div class="t" style="left:676px;top:467px;color:#0000ff"><i class="d">0</i><i class="d">:</i><i class="c">正</i><i class="c">逻</i><i class="c">辑</i></div>
<div class="t" style="left:873px;top:467px;color:#0000ff"><i class="d">0</i><i class="d">:</i><i class="c">正</i><i class="c">逻</i><i class="c">辑</i></div>
<div class="dv" style="left:76px;top:466px;height:11px"></div>
<div class="dh" style="left:78px;top:476px;width:11px"></div>
<div style="left:70px;top:486px;width:208px;height:1px;background:#f0f0f0"></div>
<div style="left:279px;top:486px;width:1100px;height:1px;background:#f0f0f0"></div>
<div style="left:279px;top:487px;width:1100px;height:19px;background:#d4e6fc"></div>
<div class="t bold" style="left:86px;top:487px;"><i class="c">原</i><i class="c">点</i><i class="c">回</i><i class="c">归</i><i class="c">参</i><i class="c">数</i></div>
<div class="t bold" style="left:282px;top:487px;"><i class="c">设</i><i class="c">置</i><i class="c">原</i><i class="c">点</i><i class="c">回</i><i class="c">归</i><i class="c">参</i><i class="c">数</i><i class="c"><svg width="13" height="20" style="position:absolute;left:0;top:0"><circle cx="4.5" cy="10.5" r="2" stroke="currentColor" stroke-width="1.6" fill="none"/></svg></i></div>
<div style="left:72px;top:492px;width:9px;height:9px;box-sizing:border-box;border:1px solid #8f8f8f;border-radius:1px;background:linear-gradient(#ffffff,#dcdcdc)"></div>
<div style="left:74px;top:496px;width:5px;height:1px;background:#3a5bb5"></div>
<div class="dv" style="left:76px;top:501px;height:5px"></div>
<div style="left:279px;top:506px;width:1100px;height:1px;background:#f0f0f0"></div>
<div style="left:279px;top:507px;width:1100px;height:19px;background:#fff"></div>
<div style="left:475px;top:506px;width:1px;height:20px;background:#f0f0f0"></div>
<div style="left:672px;top:506px;width:1px;height:20px;background:#f0f0f0"></div>
<div style="left:869px;top:506px;width:1px;height:20px;background:#f0f0f0"></div>
<div class="t" style="left:99px;top:507px;"><i class="c">原</i><i class="c">点</i><i class="c">回</i><i class="c">归</i><i class="s"></i><i class="s"></i><i class="c">启</i><i class="c">用</i><i class="d">/</i><i class="c">禁</i><i class="c">用</i></div>
<div class="t" style="left:282px;top:507px;color:#000"><i class="d">1</i><i class="d">:</i><i class="c">启</i><i class="c">用</i></div>
<div class="t" style="left:479px;top:507px;color:#000"><i class="d">1</i><i class="d">:</i><i class="c">启</i><i class="c">用</i></div>
<div class="t" style="left:676px;top:507px;color:#000"><i class="d">1</i><i class="d">:</i><i class="c">启</i><i class="c">用</i></div>
<div class="t" style="left:873px;top:507px;color:#000"><i class="d">1</i><i class="d">:</i><i class="c">启</i><i class="c">用</i></div>
<div class="dv" style="left:76px;top:506px;height:20px"></div>
<div class="dh" style="left:78px;top:516px;width:11px"></div>
<div style="left:279px;top:526px;width:1100px;height:1px;background:#f0f0f0"></div>
<div style="left:279px;top:527px;width:1100px;height:19px;background:#fff"></div>
<div style="left:475px;top:526px;width:1px;height:20px;background:#f0f0f0"></div>
<div style="left:672px;top:526px;width:1px;height:20px;background:#f0f0f0"></div>
<div style="left:869px;top:526px;width:1px;height:20px;background:#f0f0f0"></div>
<div class="t" style="left:99px;top:527px;"><i class="c">原</i><i class="c">点</i><i class="c">回</i><i class="c">归</i><i class="c">方</i><i class="c">向</i></div>
<div class="t" style="left:282px;top:527px;color:#0000ff"><i class="d">0</i><i class="d">:</i><i class="c">负</i><i class="c">方</i><i class="c">向</i><i class="d">(</i><i class="c">地</i><i class="c">址</i><i class="c">减</i><i class="c">少</i><i class="c">方</i><i class="c">向</i><i class="d">)</i></div>
<div class="t" style="left:479px;top:527px;color:#0000ff"><i class="d">0</i><i class="d">:</i><i class="c">负</i><i class="c">方</i><i class="c">向</i><i class="d">(</i><i class="c">地</i><i class="c">址</i><i class="c">减</i><i class="c">少</i><i class="c">方</i><i class="c">向</i><i class="d">)</i></div>
<div class="t" style="left:676px;top:527px;color:#0000ff"><i class="d">0</i><i class="d">:</i><i class="c">负</i><i class="c">方</i><i class="c">向</i><i class="d">(</i><i class="c">地</i><i class="c">址</i><i class="c">减</i><i class="c">少</i><i class="c">方</i><i class="c">向</i><i class="d">)</i></div>
<div class="t" style="left:873px;top:527px;color:#0000ff"><i class="d">0</i><i class="d">:</i><i class="c">负</i><i class="c">方</i><i class="c">向</i><i class="d">(</i><i class="c">地</i><i class="c">址</i><i class="c">减</i><i class="c">少</i><i class="c">方</i><i class="c">向</i><i class="d">)</i></div>
<div class="dv" style="left:76px;top:526px;height:20px"></div>
<div class="dh" style="left:78px;top:536px;width:11px"></div>
<div style="left:279px;top:546px;width:1100px;height:1px;background:#f0f0f0"></div>
<div style="left:279px;top:547px;width:1100px;height:19px;background:#fff"></div>
<div style="left:475px;top:546px;width:1px;height:20px;background:#f0f0f0"></div>
<div style="left:672px;top:546px;width:1px;height:20px;background:#f0f0f0"></div>
<div style="left:869px;top:546px;width:1px;height:20px;background:#f0f0f0"></div>
<div class="t" style="left:99px;top:547px;"><i class="c">原</i><i class="c">点</i><i class="c">地</i><i class="c">址</i></div>
<div class="t" style="left:282px;top:547px;color:#0000ff"><i class="d">0</i><i class="s"></i><i class="l">p</i><i class="l">u</i><i class="l">l</i><i class="l">s</i><i class="l">e</i></div>
<div class="t" style="left:479px;top:547px;color:#0000ff"><i class="d">0</i><i class="s"></i><i class="l">p</i><i class="l">u</i><i class="l">l</i><i class="l">s</i><i class="l">e</i></div>
<div class="t" style="left:676px;top:547px;color:#0000ff"><i class="d">0</i><i class="s"></i><i class="l">p</i><i class="l">u</i><i class="l">l</i><i class="l">s</i><i class="l">e</i></div>
<div class="t" style="left:873px;top:547px;color:#0000ff"><i class="d">0</i><i class="s"></i><i class="l">p</i><i class="l">u</i><i class="l">l</i><i class="l">s</i><i class="l">e</i></div>
<div class="dv" style="left:76px;top:546px;height:20px"></div>
<div class="dh" style="left:78px;top:556px;width:11px"></div>
<div style="left:279px;top:566px;width:1100px;height:1px;background:#f0f0f0"></div>
<div style="left:279px;top:567px;width:1100px;height:19px;background:#fff"></div>
<div style="left:475px;top:566px;width:1px;height:20px;background:#f0f0f0"></div>
<div style="left:672px;top:566px;width:1px;height:20px;background:#f0f0f0"></div>
<div style="left:869px;top:566px;width:1px;height:20px;background:#f0f0f0"></div>
<div class="t" style="left:99px;top:567px;"><i class="c">清</i><i class="c">除</i><i class="c">信</i><i class="c">号</i><i class="c">输</i><i class="c">出</i><i class="s"></i><i class="c">启</i><i class="c">用</i><i class="d">/</i><i class="c">禁</i><i class="c">用</i></div>
<div class="t" style="left:282px;top:567px;color:#000"><i class="d">0</i><i class="d">:</i><i class="c">禁</i><i class="c">用</i></div>
<div class="t" style="left:479px;top:567px;color:#000"><i class="d">0</i><i class="d">:</i><i class="c">禁</i><i class="c">用</i></div>
<div class="t" style="left:676px;top:567px;color:#000"><i class="d">0</i><i class="d">:</i><i class="c">禁</i><i class="c">用</i></div>
<div class="t" style="left:873px;top:567px;color:#000"><i class="d">0</i><i class="d">:</i><i class="c">禁</i><i class="c">用</i></div>
<div class="dv" style="left:76px;top:566px;height:20px"></div>
<div class="dh" style="left:78px;top:576px;width:11px"></div>
<div style="left:279px;top:586px;width:1100px;height:1px;background:#f0f0f0"></div>
<div style="left:279px;top:587px;width:1100px;height:19px;background:#c0c0c0"></div>
<div style="left:475px;top:586px;width:1px;height:20px;background:#f0f0f0"></div>
<div style="left:672px;top:586px;width:1px;height:20px;background:#f0f0f0"></div>
<div style="left:869px;top:586px;width:1px;height:20px;background:#f0f0f0"></div>
<div class="t" style="left:99px;top:587px;"><i class="c">清</i><i class="c">除</i><i class="c">信</i><i class="c">号</i><i class="c">输</i><i class="c">出</i><i class="s"></i><i class="c">软</i><i class="c">元</i><i class="c">件</i><i class="c">号</i></div>
<div class="t" style="left:282px;top:587px;color:#000"><i class="u m">Y</i><i class="d">0</i></div>
<div class="t" style="left:479px;top:587px;color:#000"><i class="u m">Y</i><i class="d">0</i></div>
<div class="t" style="left:676px;top:587px;color:#000"><i class="u m">Y</i><i class="d">0</i></div>
<div class="t" style="left:873px;top:587px;color:#000"><i class="u m">Y</i><i class="d">0</i></div>
<div class="dv" style="left:76px;top:586px;height:20px"></div>
<div class="dh" style="left:78px;top:596px;width:11px"></div>
<div style="left:63px;top:613px;width:1100px;height:5px;background:#f0f0f0"></div>
<div style="left:63px;top:617px;width:1100px;height:1px;background:#f4efe9"></div>
<div style="left:63px;top:618px;width:1100px;height:20px;background:#3399ff"></div>
<div class="w" style="left:65px;top:619px"><i class="c">说</i><i class="c">明</i></div>
<div style="left:63px;top:638px;width:1px;height:30px;background:#e3e6ec"></div>
<div style="left:63px;top:638px;width:1100px;height:1px;background:#e2dcd6"></div>
<div style="left:64px;top:639px;width:1100px;height:1px;background:#fff"></div>
<div style="left:64px;top:638px;width:1px;height:30px;background:#fff"></div>
<div class="t" style="left:66px;top:639px;"><i class="c">设</i><i class="c">置</i><i class="c">基</i><i class="c">本</i><i class="c">参</i><i class="c">数</i><i class="d">1</i><i class="c"><svg width="13" height="20" style="position:absolute;left:0;top:0"><circle cx="4.5" cy="10.5" r="2" stroke="currentColor" stroke-width="1.1" fill="none"/></svg></i></div>
</body></html>
